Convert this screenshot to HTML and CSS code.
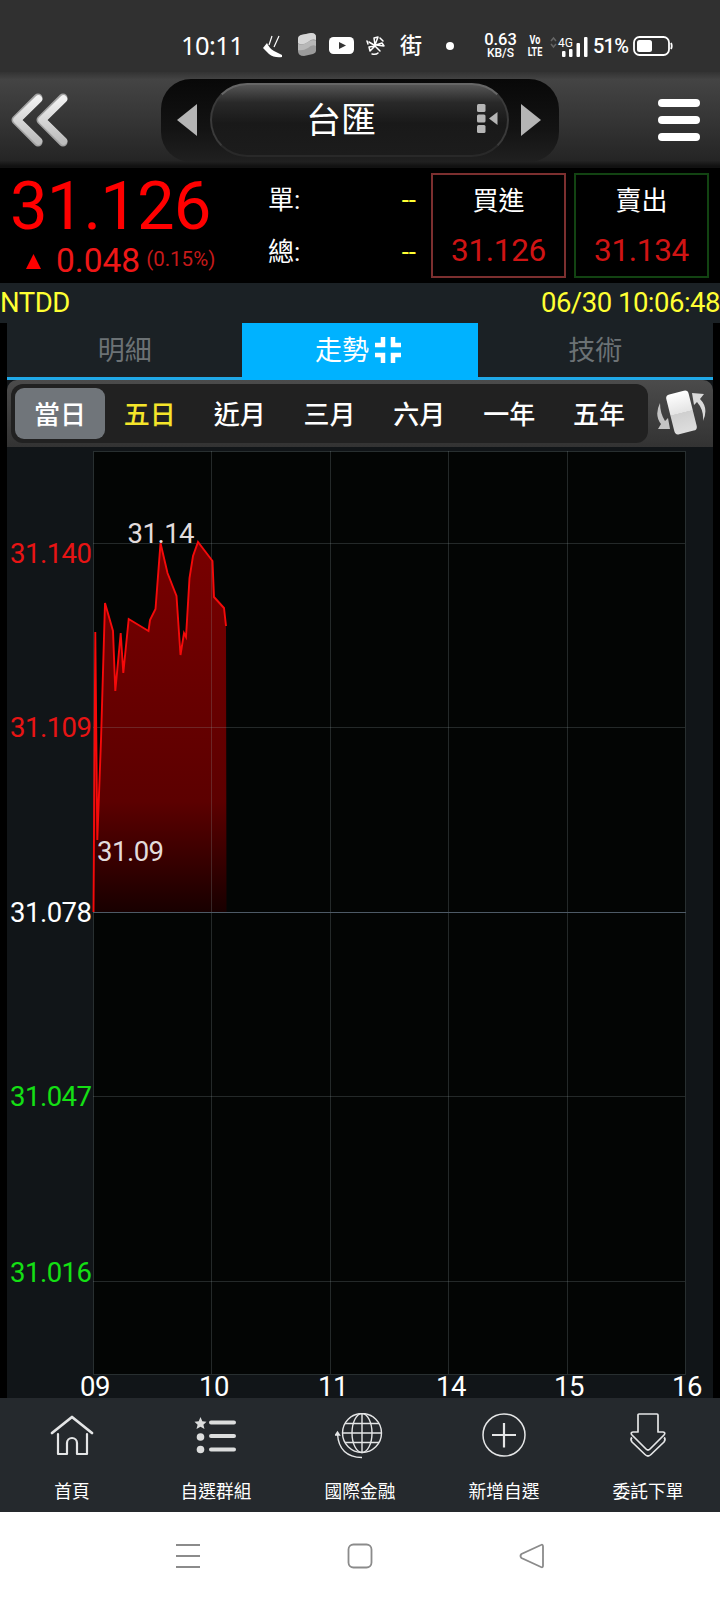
FILE: index.html
```html
<!DOCTYPE html>
<html lang="zh-Hant">
<head>
  <meta charset="UTF-8">
  <meta name="viewport" content="width=device-width, initial-scale=1.0">
  <title>台匯</title>
  <link rel="stylesheet" href="styles.css">
</head>
<body>
  <div class="status-bar">
    <span class="clock">10:11</span>
    <svg class="notify" width="138" height="28" viewBox="0 0 138 28">
      <path d="M1 15 L5 10 Q7 15 12 18 L20 22 V24 Q12 25 7 21 Z" fill="#fff"/>
      <path d="M10 3 L7 12 M17 3 L12 14" stroke="#fff" stroke-width="1.200" fill="none"/>
      <path d="M36 6 Q36 3 39 2 L49 0 Q54 0 54 4 V18 Q54 20 51 21 L42 23 Q36 23 36 18 Z" fill="#9b9b9b"/>
      <path d="M36 6 Q36 3 39 2 L49 0 Q54 0 54 4 V7 Q50 5 46 9 Q40 13 36 10 Z" fill="#d6d6d6"/>
      <path d="M36 11 Q41 13 46 9 Q50 6 54 8 V13 Q50 11 46 15 Q41 18 36 17 Z" fill="#b8b8b8"/>
      <rect x="67" y="4" width="25" height="17" rx="4.500" fill="#fff"/>
      <path d="M77 9 L84 12.500 L77 16 Z" fill="#333"/>
      <g fill="none" stroke="#fff" stroke-width="1.500" stroke-linecap="round" stroke-linejoin="round">
        <path d="M113 12 L112 5 L116 4 Z M114 12 L120 10 L122 13 Z M113 13 L118 18 M113 13 L108 18 L107 14 Z M112 12 L107 9"/>
        <path d="M118 5 L121 8 M110 21 Q114 22 116 20 M106 11 L105 8"/>
      </g>
    </svg>
    <span class="street">街</span>
    <span class="dot"></span>
    <span class="speed"><b>0.63</b><small>KB/S</small></span>
    <span class="volte"><b>Vo</b><b>LTE</b></span>
    <svg class="signal" width="40" height="24" viewBox="0 0 40 24">
      <path d="M1 7 L3.500 4 L6 7 M1 10 L3.500 13 L6 10" fill="none" stroke="#666" stroke-width="1.500"/>
      <text x="8" y="13" textLength="15" lengthAdjust="spacingAndGlyphs">4G</text>
      <g fill="#fff">
        <rect x="12" y="17" width="3.500" height="6" rx="1"/>
        <rect x="19" y="15" width="3.500" height="8" rx="1"/>
        <rect x="26.500" y="9" width="3.500" height="14" rx="1"/>
        <rect x="34" y="3" width="3.500" height="20" rx="1"/>
      </g>
    </svg>
    <span class="percent">51%</span>
    <svg width="40" height="22" viewBox="0 0 40 22">
      <rect x="1" y="2" width="35" height="18" rx="5.500" fill="none" stroke="#fff" stroke-width="1.800"/>
      <rect x="4" y="5" width="15" height="12" rx="2.500" fill="#fff"/>
      <path d="M38 8 Q39.500 11 38 14" stroke="#fff" stroke-width="1.800" fill="none"/>
    </svg>
  </div>

  <header class="top-bar">
    <svg class="back" width="62" height="58" viewBox="0 0 62 58">
      <defs>
        <linearGradient id="silver" x1="0" y1="0" x2="0" y2="1">
          <stop offset="0" stop-color="#f1f1f1"/>
          <stop offset="1" stop-color="#bdbdbd"/>
        </linearGradient>
      </defs>
      <path d="M28 7 L6 29 L28 51 M53 7 L31 29 L53 51" fill="none" stroke="#a2a2a2" stroke-width="9" stroke-linecap="round" stroke-linejoin="round"/>
      <path d="M28.500 8 L7 29 L28.500 50 M53.500 8 L32 29 L53.500 50" fill="none" stroke="url(#silver)" stroke-width="7.500" stroke-linecap="round" stroke-linejoin="round"/>
    </svg>
    <div class="switcher">
      <svg width="20" height="32" viewBox="0 0 20 32"><path d="M20 0 V32 L0 16 Z" fill="#b5b5b5"/></svg>
      <div class="symbol">
        <span>台匯</span>
        <svg class="picker" width="22" height="30" viewBox="0 0 22 30" fill="#b5b5b5">
          <rect x="0" y="0" width="8.500" height="8" rx="1.500"/>
          <rect x="0" y="10.500" width="8.500" height="8" rx="1.500"/>
          <rect x="0" y="21" width="8.500" height="8" rx="1.500"/>
          <path d="M20.500 8 V21 L12 14.500 Z"/>
        </svg>
      </div>
      <svg width="20" height="32" viewBox="0 0 20 32"><path d="M0 0 V32 L20 16 Z" fill="#b5b5b5"/></svg>
    </div>
    <div class="menu"><i></i><i></i><i></i></div>
  </header>

  <section class="quote">
    <div class="last">
      <div class="price">31.126</div>
      <div class="change">
        <svg width="15" height="15" viewBox="0 0 15 15"><path d="M7.500 0 L15 15 H0 Z" fill="#f00"/></svg>
        <span>0.048</span>
        <small>(0.15%)</small>
      </div>
    </div>
    <div class="volume">
      <div><span>單:</span><em>--</em></div>
      <div><span>總:</span><em>--</em></div>
    </div>
    <div class="deal buy"><span>買進</span><b>31.126</b></div>
    <div class="deal sell"><span>賣出</span><b>31.134</b></div>
  </section>

  <div class="info"><span>NTDD</span><span>06/30 10:06:48</span></div>

  <main class="panel">
    <nav class="tabs">
      <div class="tab">明細</div>
      <div class="tab active">
        走勢
        <svg width="26" height="26" viewBox="0 0 26 26"><path d="M8 0 V8 H0 M18 0 V8 H26 M0 18 H8 V26 M26 18 H18 V26" fill="none" stroke="#fff" stroke-width="4.500"/></svg>
      </div>
      <div class="tab">技術</div>
    </nav>

    <div class="period-bar">
      <div class="periods">
        <span class="selected">當日</span>
        <span class="yellow">五日</span>
        <span>近月</span>
        <span>三月</span>
        <span>六月</span>
        <span>一年</span>
        <span>五年</span>
      </div>
      <svg class="rotate" width="50" height="46" viewBox="0 0 50 46">
        <defs>
          <linearGradient id="phone" x1="0" y1="0" x2="0" y2="1">
            <stop offset="0" stop-color="#fff"/>
            <stop offset=".5" stop-color="#e4e4e4"/>
            <stop offset=".51" stop-color="#cfcfcf"/>
            <stop offset="1" stop-color="#dedede"/>
          </linearGradient>
        </defs>
        <rect x="14" y="2" width="23" height="41" rx="4" transform="rotate(-14 25.500 22.500)" fill="url(#phone)"/>
        <path d="M4 13 Q-2 25 5 34 L2 39 L14 39 L12 28 L9 31 Q4 23 4 13 Z" fill="#c4c4c4"/>
        <path d="M47 31 Q53 18 44 9 L48 4 L36 3 L38 15 L41 12 Q48 20 47 31 Z" fill="#dadada"/>
      </svg>
    </div>

    <svg class="chart" width="706" height="951" viewBox="7 447 706 951">
      <defs>
        <linearGradient id="area" gradientUnits="userSpaceOnUse" x1="0" y1="543" x2="0" y2="912">
          <stop offset="0" stop-color="#780000"/>
          <stop offset=".7" stop-color="#5c0000"/>
          <stop offset="1" stop-color="#180000"/>
        </linearGradient>
      </defs>
      <rect x="93.500" y="451.500" width="592" height="923" fill="#030504"/>
      <path d="M93.500 912 L95.300 632 L97.300 840 L101 740 L105 603 L113 631 L115.300 691 L120.700 633 L123.300 673 L128.700 619 L148.500 631 L150 620 L155.500 609 L160.500 543 L167.500 573 L176.500 596 L180.500 655 L184 633 L186 637 L189.500 578 L193 556 L198 542 L212.500 561 L214 597 L224 608 L226 626 L226.500 912 Z" fill="url(#area)"/>
      <g class="grid">
        <path d="M93.500 451.500 H685.500 V1374.500 H93.500 Z"/>
        <path d="M211.500 451 V1374 M330.500 451 V1374 M448.500 451 V1374 M567.500 451 V1374"/>
        <path d="M93 543.500 H685 M93 727.500 H685 M93 1096.500 H685 M93 1281.500 H685"/>
      </g>
      <path d="M93 912.500 H686" stroke="#4d5a66"/>
      <path d="M93.500 912 L95.300 632 L97.300 840 L101 740 L105 603 L113 631 L115.300 691 L120.700 633 L123.300 673 L128.700 619 L148.500 631 L150 620 L155.500 609 L160.500 543 L167.500 573 L176.500 596 L180.500 655 L184 633 L186 637 L189.500 578 L193 556 L198 542 L212.500 561 L214 597 L224 608 L226 626" fill="none" stroke="#f50a0a" stroke-width="1.900"/>
      <g class="axis-y">
        <text x="91.500" y="562.500" class="up">31.140</text>
        <text x="91.500" y="737" class="up">31.109</text>
        <text x="91.500" y="922">31.078</text>
        <text x="91.500" y="1106" class="down">31.047</text>
        <text x="91.500" y="1281.500" class="down">31.016</text>
      </g>
      <g class="axis-x">
        <text x="95" y="1395.500">09</text>
        <text x="214" y="1395.500">10</text>
        <text x="333" y="1395.500">11</text>
        <text x="451" y="1395.500">14</text>
        <text x="569" y="1395.500">15</text>
        <text x="687" y="1395.500">16</text>
      </g>
      <g class="marks">
        <text x="127.500" y="543">31.14</text>
        <text x="97" y="860.500">31.09</text>
      </g>
    </svg>
  </main>

  <footer class="bottom-nav">
    <a>
      <svg width="44" height="46" viewBox="0 0 44 46" fill="none" stroke="#e4e5e6" stroke-width="2.200" stroke-linecap="round" stroke-linejoin="round">
        <path d="M2 20 L22 4 L42 20" stroke-width="2.800"/>
        <path d="M8 21 V41 H17 V30 A5 5 0 0 1 27 30 V41 H37 V21"/>
      </svg>
      <span>首頁</span>
    </a>
    <a>
      <svg width="44" height="46" viewBox="0 0 44 46" fill="#dcdddd">
        <path d="M6.500 4 L8.300 8.300 L12.500 8.700 L9.400 11.700 L10.500 16 L6.500 13.700 L2.500 16 L3.600 11.700 L0.500 8.700 L4.700 8.300 Z"/>
        <circle cx="6.500" cy="24" r="3.800"/>
        <circle cx="6.500" cy="36.500" r="3.800"/>
        <path d="M17 9.500 H40 M17 23 H40 M17 36.500 H40" stroke="#dcdddd" stroke-width="4" stroke-linecap="round"/>
      </svg>
      <span>自選群組</span>
    </a>
    <a>
      <svg width="50" height="46" viewBox="0 0 50 46" fill="none" stroke="#e4e5e6" stroke-width="1.400">
        <circle cx="27" cy="20" r="19.500"/>
        <ellipse cx="27" cy="20" rx="10" ry="19.500"/>
        <path d="M27 0.500 V39.500 M7.500 20 H46.500 M10 10.500 H44 M10 29.500 H44"/>
        <path d="M2.500 21 Q4 44 27 44.500"/>
        <path d="M0.500 22 L2.500 19 L4.500 22 Z" fill="#e4e5e6"/>
      </svg>
      <span>國際金融</span>
    </a>
    <a>
      <svg width="44" height="46" viewBox="0 0 44 46" fill="none" stroke="#e4e5e6">
        <circle cx="22" cy="22" r="21" stroke-width="1.500"/>
        <path d="M22 10 V34.500 M10 22 H34" stroke-width="2.200"/>
      </svg>
      <span>新增自選</span>
    </a>
    <a>
      <svg width="44" height="46" viewBox="0 0 44 46" fill="none" stroke="#e4e5e6" stroke-width="1.700" stroke-linejoin="round">
        <path d="M13 1 H31 Q32 1 32 2 V19 H37 Q40 19.500 38 22 L24 36 Q22 38 20 36 L6 22 Q4 19.500 7 19 H12 V2 Q12 1 13 1 Z"/>
        <path d="M6 24.500 Q4 26 6 29 L19 41.500 Q22 44.500 25 41.500 L38 29 Q40 26 38 24.500"/>
      </svg>
      <span>委託下單</span>
    </a>
  </footer>

  <div class="system-nav">
    <svg width="26" height="26" viewBox="0 0 26 26"><path d="M1 2 H25 M1 13 H25 M1 24 H25"/></svg>
    <svg width="26" height="26" viewBox="0 0 26 26"><rect x="1.500" y="1.500" width="23" height="23" rx="5"/></svg>
    <svg width="26" height="26" viewBox="0 0 26 26"><path d="M22 2 Q24 1 24 3.500 V22.500 Q24 25 22 24 L2.500 15 Q0.500 13 2.500 11 Z"/></svg>
  </div>
</body>
</html>
```
FILE: styles.css
```css
* {
  box-sizing: border-box;
}

body {
  margin: 0;
  width: 720px;
  height: 1600px;
  overflow: hidden;
  background: #000;
  color: #fff;
  font-family: Roboto, "Noto Sans CJK TC", sans-serif;
}

svg {
  display: block;
  flex-shrink: 0;
}

/* status bar */
.status-bar {
  height: 72px;
  padding: 20px 0 0 181px;
  background: #303030;
  display: flex;
  align-items: center;
  line-height: 1;
}

.clock {
  width: 81px;
  font-family: "Noto Sans", sans-serif;
  font-size: 25.5px;
  letter-spacing: -0.6px;
}

.notify {
  margin-top: 2px;
}

.street {
  width: 45px;
  font-size: 22px;
  font-weight: 500;
  line-height: 26px;
}

.dot {
  width: 8px;
  height: 8px;
  margin-left: 1px;
  border-radius: 50%;
  background: #fff;
}

.speed {
  width: 43px;
  margin-left: 25px;
  text-align: center;
}

.speed b {
  display: block;
  font-size: 16.5px;
  line-height: 14px;
  font-weight: 500;
}

.speed small {
  display: block;
  font-size: 12px;
  line-height: 12px;
  font-weight: 500;
}

.volte {
  width: 24px;
  margin-left: 1px;
  font-size: 12px;
  line-height: 12px;
  text-align: center;
  transform: scaleX(.75);
}

.volte b {
  display: block;
}

.signal {
  margin-left: 3px;
}

.signal text {
  font-size: 13px;
  fill: #fff;
}

.percent {
  width: 37px;
  margin: 0 3px;
  font-size: 20px;
  font-weight: 500;
  letter-spacing: -0.8px;
}

/* title */
.top-bar {
  height: 96px;
  padding: 0 20px 0 10px;
  background: linear-gradient(#333, #444 8%, #353535 50%, #252525 92%, #111 98%);
  display: flex;
  align-items: center;
}

.switcher {
  width: 398px;
  height: 83px;
  margin-left: 89px;
  padding: 0 18px 0 16px;
  border-radius: 30px;
  background: linear-gradient(#080808, #131313 60%, #202020);
  display: flex;
  align-items: center;
  justify-content: space-between;
}

.symbol {
  position: relative;
  width: 299px;
  height: 74px;
  border: 2px solid #3a3a3a;
  border-top-color: #666;
  border-bottom-color: #292929;
  border-radius: 37px;
  background: linear-gradient(#555, #292929 25%, #191919 55%, #1c1c1c);
  font-size: 35px;
  line-height: 74px;
  text-align: center;
}

.symbol span {
  display: block;
  margin-right: 36px;
}

.picker {
  position: absolute;
  right: 8px;
  top: 19px;
}

.menu {
  width: 42px;
  margin-left: 99px;
  display: flex;
  flex-direction: column;
  gap: 9px;
}

.menu i {
  height: 8px;
  border-radius: 4px;
  background: #fff;
}

/* quote */
.quote {
  height: 115px;
  padding: 5px 11px 5px 10px;
  display: flex;
}

.last {
  width: 258px;
  color: #f00;
}

.price {
  height: 67px;
  font-size: 67px;
  line-height: 66px;
  letter-spacing: -0.9px;
}

.change {
  display: flex;
  align-items: center;
  padding-left: 16px;
  font-size: 33.5px;
  line-height: 38px;
}

.change span {
  margin-left: 15px;
  color: #ef1717;
}

.change small {
  margin-left: 6px;
  font-size: 20.5px;
  color: #c51a1a;
  padding-bottom: 4px;
}

.volume {
  width: 163px;
  padding-right: 15px;
  font-size: 26px;
}

.volume div {
  height: 52px;
  line-height: 55px;
  display: flex;
  justify-content: space-between;
}

.volume em {
  font-style: normal;
  color: #ff3;
}

.deal {
  width: 135px;
  height: 105px;
  border: 2px solid #7c2f2f;
  text-align: center;
}

.deal + .deal {
  margin-left: 8px;
}

.deal.sell {
  border-color: #124312;
}

.deal span {
  display: block;
  height: 51px;
  font-size: 26px;
  line-height: 52px;
}

.deal b {
  display: block;
  font-size: 31.5px;
  line-height: 50px;
  font-weight: 400;
  letter-spacing: -0.3px;
  color: #d01414;
}

.info {
  height: 40px;
  background: #1b2125;
  display: flex;
  justify-content: space-between;
  font-size: 27.5px;
  line-height: 39px;
  letter-spacing: -0.5px;
  color: #ff3;
}

/* tabs */
.panel {
  width: 706px;
  height: 1075px;
  margin-left: 7px;
  background: #111518;
}

.tabs {
  height: 57px;
  background: #1b2125;
  border-bottom: 3px solid #20a9e8;
  display: flex;
}

.tab {
  width: 235.3px;
  height: 54px;
  font-size: 27px;
  line-height: 57px;
  text-align: center;
  color: #6c7275;
}

.tab.active {
  height: 57px;
  padding-right: 4px;
  background: #00b2ff;
  color: #fff;
  display: flex;
  justify-content: center;
  gap: 6px;
}

.tab.active svg {
  margin-top: 14px;
}

.period-bar {
  height: 67px;
  padding: 4px 7px 4px 4px;
  border-radius: 10px 10px 0 0;
  background: linear-gradient(#4b4b4b, #333);
  display: flex;
  justify-content: space-between;
}

.periods {
  width: 637px;
  height: 59px;
  padding: 4px;
  border-radius: 12px;
  background: #212121;
  display: flex;
}

.periods span {
  width: 90px;
  height: 51px;
  line-height: 54px;
  font-size: 26px;
  font-weight: 500;
  text-align: center;
}

.periods .selected {
  border-radius: 9px;
  background: #70757a;
}

.periods .yellow {
  color: #f5e52a;
}

.rotate {
  margin-top: 6px;
}

/* chart */
.chart {
  overflow: visible;
  font-size: 27.5px;
  letter-spacing: -0.5px;
}

.chart text {
  fill: #fff;
}

.grid {
  fill: none;
  stroke: #8fa0a0;
  stroke-opacity: .24;
}

.axis-y {
  text-anchor: end;
}

.axis-x {
  text-anchor: middle;
}

.chart .up {
  fill: #e81414;
}

.chart .down {
  fill: #14e014;
}

.chart .marks text {
  fill: #e2dcdc;
}

/* bottom navigation */
.bottom-nav {
  height: 114px;
  padding-top: 15px;
  background: #25292d;
  display: flex;
}

.bottom-nav a {
  width: 144px;
  display: flex;
  flex-direction: column;
  align-items: center;
}

.bottom-nav span {
  margin-top: 19px;
  font-size: 17.7px;
  line-height: 28px;
}

.system-nav {
  height: 88px;
  padding: 0 175px;
  background: #fff;
  display: flex;
  align-items: center;
  justify-content: space-between;
}

.system-nav svg {
  fill: none;
  stroke: #8b8b8b;
  stroke-width: 1.8;
}
```
